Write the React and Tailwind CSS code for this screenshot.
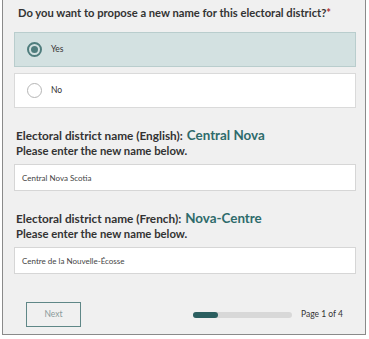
export default function App() {
  const font = { fontFamily: "Lato, 'Open Sans', sans-serif" };
  return (
    <div className="w-[369px] h-[339px] bg-white" style={font}>
      <div className="ml-[2px] w-[364px] h-[335px] border-x border-b border-[#8a8a8a] bg-[#f0f0f0] pl-[11px] pr-[9px] pt-[5px]">
        <h2 className="text-[11.2px] font-bold text-[#333] leading-[16px] pl-[4px]">
          Do you want to propose a new name for this electoral district?
          <span className="text-[#b03030]">*</span>
        </h2>

        <div className="mt-[11px] flex flex-col gap-[6px]">
          <label className="h-[35px] flex items-center gap-[9px] pl-[12px] bg-[#d3e1e1] border border-[#b9cdcd]">
            <span className="w-[15px] h-[15px] rounded-full border-2 border-[#4f7d7d] flex items-center justify-center">
              <span className="w-[7px] h-[7px] rounded-full bg-[#4f7d7d]" />
            </span>
            <span className="text-[8.5px] text-[#333]">Yes</span>
          </label>
          <label className="h-[35px] flex items-center gap-[9px] pl-[12px] bg-white border border-[#dadada]">
            <span className="w-[15px] h-[15px] rounded-full border border-[#b5b5b5] bg-white" />
            <span className="text-[8.5px] text-[#333]">No</span>
          </label>
        </div>

        <div className="mt-[20px] pl-[2px]">
          <p className="text-[11.8px] font-bold text-[#333] leading-[15px] flex items-baseline gap-[4px]">
            Electoral district name (English):
            <span className="text-[13.4px] text-[#2e6b6b]">Central Nova</span>
          </p>
          <p className="text-[11.3px] font-bold text-[#333] leading-[15px]">Please enter the new name below.</p>
        </div>
        <div className="mt-[6px] h-[27px] bg-white border border-[#d6d6d6] flex items-center pl-[7px] text-[8px] text-[#444]">
          Central Nova Scotia
        </div>

        <div className="mt-[20px] pl-[2px]">
          <p className="text-[11.8px] font-bold text-[#333] leading-[15px] flex items-baseline gap-[4px]">
            Electoral district name (French):
            <span className="text-[13.4px] text-[#2e6b6b]">Nova-Centre</span>
          </p>
          <p className="text-[11.3px] font-bold text-[#333] leading-[15px]">Please enter the new name below.</p>
        </div>
        <div className="mt-[6px] h-[27px] bg-white border border-[#d6d6d6] flex items-center pl-[7px] text-[8px] text-[#444]">
          Centre de la Nouvelle-Écosse
        </div>

        <div className="mt-[28px] flex items-center">
          <button className="ml-[12px] w-[55px] h-[25px] border border-[#5f8787] bg-[#f0f0f0] text-[8.5px] text-[#8a9a9a]">
            Next
          </button>
          <div className="ml-[112px] w-[99px] h-[6px] rounded-full bg-[#d8d8d8]">
            <div className="w-[25px] h-[6px] rounded-full bg-[#2b5f60]" />
          </div>
          <span className="ml-[9px] text-[8.5px] text-[#333]">Page 1 of 4</span>
        </div>
      </div>
    </div>
  );
}
